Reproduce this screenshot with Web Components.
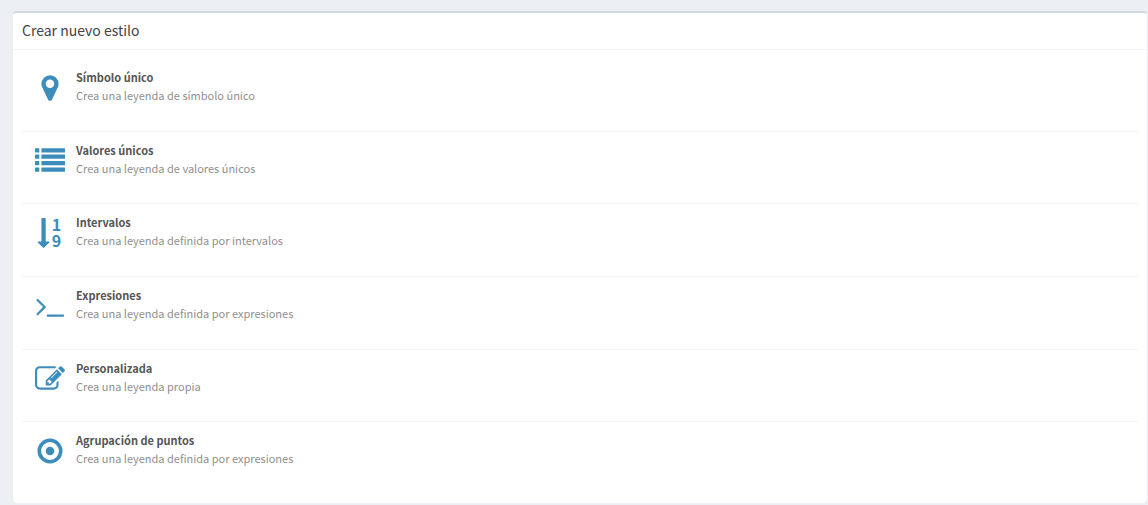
<!DOCTYPE html>
<html lang="es">
<head>
<meta charset="utf-8">
<title>Crear nuevo estilo</title>
<style>
body { margin: 0; background: #ecf0f5; color: #444; font-family: "Noto Sans CJK SC", "Noto Sans", sans-serif; font-size: 11px; }
</style>
</head>
<body>
<style-panel>
  <span slot="title">Crear nuevo estilo</span>
  <style-option icon="marker" href="#simbolo"><span slot="name">Símbolo único</span>Crea una leyenda de símbolo único</style-option>
  <style-option icon="list" href="#valores"><span slot="name">Valores únicos</span>Crea una leyenda de valores únicos</style-option>
  <style-option icon="sort" href="#intervalos"><span slot="name">Intervalos</span>Crea una leyenda definida por intervalos</style-option>
  <style-option icon="terminal" href="#expresiones"><span slot="name">Expresiones</span>Crea una leyenda definida por expresiones</style-option>
  <style-option icon="edit" href="#personalizada"><span slot="name">Personalizada</span>Crea una leyenda propia</style-option>
  <style-option icon="target" href="#agrupacion"><span slot="name">Agrupación de puntos</span>Crea una leyenda definida por expresiones</style-option>
</style-panel>

<template id="panel">
  <style>
    :host { display: block; margin: 11px 1px 0 13px; background: #fff; border-top: 2px solid #d2d6de; border-radius: 3px; box-shadow: 0 1px 1px rgba(0, 0, 0, .1); }
    header { padding: 5px 9px 7px; border-bottom: 1px solid #f4f4f4; }
    h3 { margin: 0; font-size: 14px; line-height: 24px; font-weight: 400; }
    .list { display: grid; grid-auto-rows: 1fr; min-height: 436px; padding: 9px 9px 8px; }
    ::slotted(style-option:not(:last-child)) { border-bottom: 1px solid #f4f4f4; }
  </style>
  <header><h3><slot name="title"></slot></h3></header>
  <div class="list"><slot></slot></div>
</template>

<template id="option">
  <style>
    :host { display: flex; gap: 11px; padding: 9px 13px; }
    option-icon { margin-top: 5px; }
    .text { flex: 1; min-width: 0; line-height: 18px; color: #8f8f8f; }
    a { display: block; width: fit-content; color: #555; font-weight: 700; text-decoration: none; }
  </style>
  <option-icon></option-icon>
  <div class="text"><a><slot name="name"></slot></a><slot></slot></div>
</template>

<script>
const ICONS = {
  marker: '<path transform="translate(384 0)" d="M768 640q0-106-75-181t-181-75-181 75-75 181 75 181 181 75 181-75 75-181zm256 0q0 109-33 179l-364 774q-16 33-47.500 52t-67.500 19-67.500-19-46.500-52l-365-774q-33-70-33-179 0-212 150-362t362-150 362 150 150 362z"/>',
  list: [128, 512, 896, 1280].map(y => `<rect y="${y}" width="256" height="256" rx="32"/><rect x="384" y="${y}" width="1408" height="256" rx="32"/>`).join(''),
  sort: '<path transform="translate(128 0)" d="M736 1440q0 12-10 24l-319 319q-10 9-23 9-12 0-23-9l-320-320q-15-16-7-35 8-20 30-20h192v-1376q0-14 9-23t23-9h192q14 0 23 9t9 23v1376h192q14 0 23 9t9 23z"/><text x="1000" y="760">1</text><text x="1000" y="1760">9</text>',
  terminal: '<path transform="translate(64 0)" d="M585 983l-466 466q-10 10-23 10t-23-10l-50-50q-10-10-10-23t10-23l393-393-393-393q-10-10-10-23t10-23l50-50q10-10 23-10t23 10l466 466q10 10 10 23t-10 23zm1079 457v64q0 14-9 23t-23 9h-960q-14 0-23-9t-9-23v-64q0-14 9-23t23-9h960q14 0 23 9t9 23z"/>',
  edit: '<path d="M888 1184l116-116-152-152-116 116v56h96v96h56zm440-720q-16-16-33 1l-350 350q-17 17-1 33t33-1l350-350q17-17 1-33zm80 594v190q0 119-84.500 203.500t-203.500 84.500h-832q-119 0-203.500-84.500t-84.500-203.500v-832q0-119 84.500-203.500t203.500-84.500h832q63 0 117 25 15 7 18 23 3 17-9 29l-49 49q-14 14-32 8-23-6-45-6h-832q-66 0-113 47t-47 113v832q0 66 47 113t113 47h832q66 0 113-47t47-113v-126q0-13 9-22l64-64q15-15 35-7t20 29zm-96-738l288 288-672 672h-288v-288zm444 132l-92 92-288-288 92-92q28-28 68-28t68 28l152 152q28 28 28 68t-28 68z"/>',
  target: '<circle cx="896" cy="896" r="640" fill="none" stroke="currentColor" stroke-width="216"/><circle cx="896" cy="896" r="256"/>'
};

class OptionIcon extends HTMLElement {
  set name(value) {
    const root = this.shadowRoot || this.attachShadow({ mode: 'open' });
    root.innerHTML = `<style>
      :host { display: block; flex: none; width: 30px; height: 30px; color: #3c8dbc; }
      svg { display: block; width: 100%; height: 100%; fill: currentColor; overflow: visible; }
      text { font-size: 960px; font-weight: 700; }
    </style><svg viewBox="0 0 1792 1792" aria-hidden="true">${ICONS[value] || ''}</svg>`;
  }
}
customElements.define('option-icon', OptionIcon);

class StyleOption extends HTMLElement {
  constructor() {
    super();
    this.attachShadow({ mode: 'open' }).append(document.importNode(document.getElementById('option').content, true));
  }
  connectedCallback() {
    this.shadowRoot.querySelector('option-icon').name = this.getAttribute('icon');
    this.shadowRoot.querySelector('a').href = this.getAttribute('href');
  }
}
customElements.define('style-option', StyleOption);

class StylePanel extends HTMLElement {
  constructor() {
    super();
    this.attachShadow({ mode: 'open' }).append(document.importNode(document.getElementById('panel').content, true));
  }
}
customElements.define('style-panel', StylePanel);
</script>
</body>
</html>
